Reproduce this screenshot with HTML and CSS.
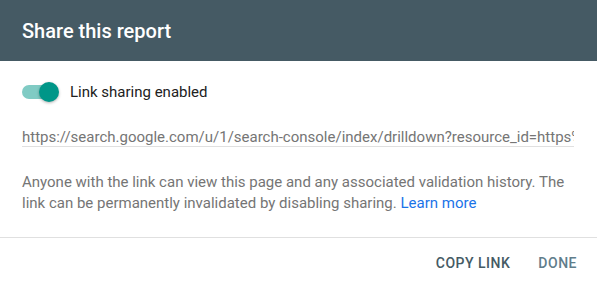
FILE: index.html
```html
<!DOCTYPE html>
<html>
<head>
<meta charset="utf-8">
<link rel="stylesheet" href="styles.css">
</head>
<body>
<div class="dialog">
  <div class="header">Share this report</div>
  <div class="content">
    <div class="toggle-row">
      <span class="switch"><span class="track"></span><span class="thumb"></span></span>
      <span class="label">Link sharing enabled</span>
    </div>
    <div class="url">https://search.google.com/u/1/search-console/index/drilldown?resource_id=https%3A%2F%2Fexample.com</div>
    <p class="desc">Anyone with the link can view this page and any associated validation history. The link can be permanently invalidated by disabling sharing. <a class="learn" href="#">Learn more</a></p>
  </div>
  <div class="actions">
    <button class="btn copy">COPY LINK</button>
    <button class="btn done">DONE</button>
  </div>
</div>
</body>
</html>
```
FILE: styles.css
```css
* { box-sizing: border-box; }
html, body { margin: 0; padding: 0; background: #fff; }
body { font-family: Roboto, "Liberation Sans", sans-serif; width: 597px; height: 288px; overflow: hidden; }
.dialog { width: 597px; }
.header {
  height: 61px;
  background: #455a64;
  color: #fff;
  font-size: 20px;
  font-weight: 500;
  padding-left: 22px;
  display: flex;
  align-items: center;
}
.content { padding: 20px 22px 0 22px; }
.toggle-row { display: flex; align-items: center; height: 22px; }
.switch { position: relative; width: 38px; height: 20px; display: inline-block; }
.track {
  position: absolute; left: 0; top: 3px; width: 36px; height: 14px;
  border-radius: 7px; background: #80cbc4;
}
.thumb {
  position: absolute; left: 17px; top: 0; width: 20px; height: 20px; border-radius: 50%;
  background: #009688; box-shadow: 0 1px 3px rgba(0,0,0,.3);
}
.label { margin-left: 10px; font-size: 15px; color: #212121; }
.url {
  margin-top: 25px;
  width: 552px;
  font-size: 15px;
  line-height: 18px;
  color: #757575;
  white-space: nowrap;
  overflow: hidden;
  border-bottom: 1px solid #e0e0e0;
}
.desc {
  margin: 25px 0 0 0;
  font-size: 15px;
  line-height: 21px;
  color: #757575;
}
.learn { color: #1a73e8; text-decoration: none; }
.actions {
  margin-top: 23px;
  border-top: 1px solid #e0e0e0;
  height: 51px;
  display: flex;
  justify-content: flex-end;
  align-items: center;
  padding-right: 12px;
}
.btn {
  background: none; border: none;
  font-family: Roboto, "Liberation Sans", sans-serif;
  font-size: 14px; font-weight: 500; letter-spacing: 0.5px;
  padding: 8px 8px;
  margin-left: 12px;
}
.copy { color: #455a64; }
.done { color: #607d8b; }
```
